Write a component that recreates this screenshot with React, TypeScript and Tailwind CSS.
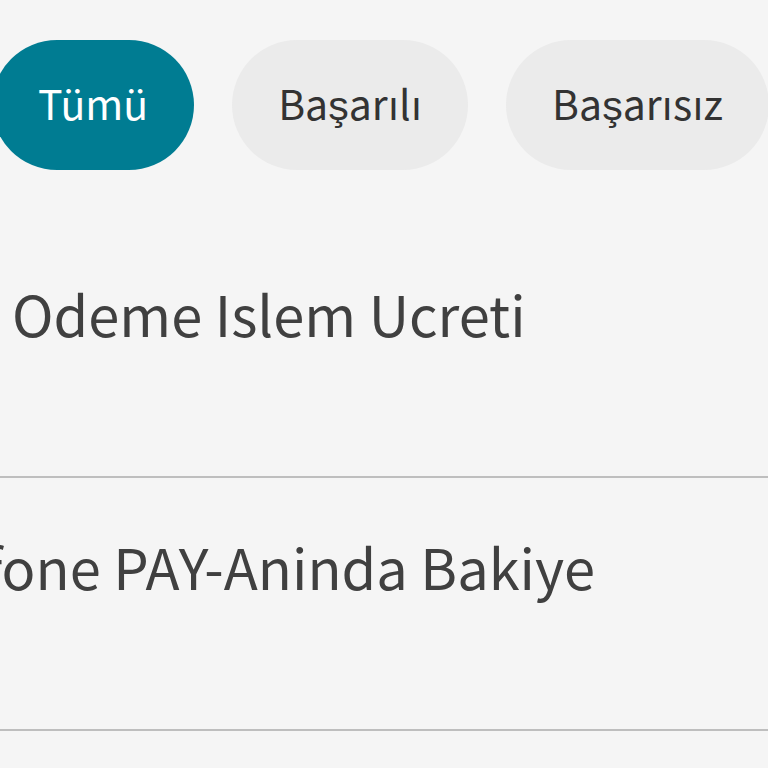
import { useState } from 'react';

const filters = ['Tümü', 'Başarılı', 'Başarısız'];

const transactions = [
  { id: 1, title: 'Odeme Islem Ucreti', indent: 'ml-3' },
  { id: 2, title: 'fone PAY-Aninda Bakiye', indent: '-ml-4' },
];

export default function App() {
  const [active, setActive] = useState('Tümü');

  return (
    <main className="min-h-screen overflow-hidden bg-[#f5f5f5] font-['Noto_Sans_CJK_SC',sans-serif] text-[#404040]">
      <div className="-ml-2 flex gap-[38px] pt-10">
        {filters.map((filter) => (
          <button
            key={filter}
            type="button"
            aria-pressed={active === filter}
            onClick={() => setActive(filter)}
            className={`h-[130px] shrink-0 rounded-full px-[46px] pb-1 text-[41px] ${
              active === filter ? 'bg-[#007c92] text-white' : 'bg-[#ebebeb] text-[#333333]'
            }`}
          >
            {filter}
          </button>
        ))}
      </div>

      <ul className="pt-[55px]">
        {transactions.map((item) => (
          <li key={item.id} className="h-[253px] border-b-2 border-[#bebebe] pt-12">
            <p className={`text-[56px] leading-[80px] whitespace-nowrap ${item.indent}`}>
              {item.title}
            </p>
          </li>
        ))}
      </ul>
    </main>
  );
}
